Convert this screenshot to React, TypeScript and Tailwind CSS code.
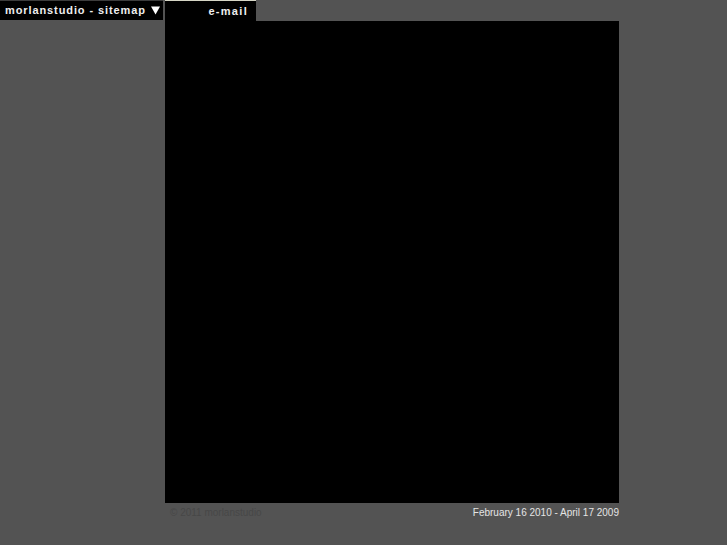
export default function App() {
  return (
    <div className="min-h-[545px] w-full bg-[#535353] font-['Liberation_Sans',Arial,sans-serif]">
      <div className="flex">
        <div className="w-[163px] shrink-0">
          <div className="flex h-[20px] items-center justify-between border-t border-[#3c3c3c] bg-black pl-[5px] pr-[2px]">
            <span className="text-[11px] font-bold tracking-[0.9px] text-[#eeeeee]">morlanstudio - sitemap</span>
            <svg width="9" height="9" viewBox="0 0 9 9" className="mr-[1px]">
              <path d="M0 0.5 H9 L4.5 8.5 Z" fill="#ffffff" />
            </svg>
          </div>
        </div>
        <div className="ml-[2px] w-[454px] shrink-0">
          <div className="flex h-[21px] w-[91px] items-center justify-end border-t border-[#d6d6c6] bg-black pr-[8px]">
            <span className="text-[11px] font-bold tracking-[1.3px] text-[#eeeeee]">e-mail</span>
          </div>
          <div className="h-[482px] bg-black" />
          <div className="flex items-center justify-between pl-[5px] pt-[2px]">
            <span className="text-[10px] text-[#474747]">© 2011 morlanstudio</span>
            <span className="text-[10px] text-[#e4e4e4]">February 16 2010 - April 17 2009</span>
          </div>
        </div>
      </div>
    </div>
  );
}
